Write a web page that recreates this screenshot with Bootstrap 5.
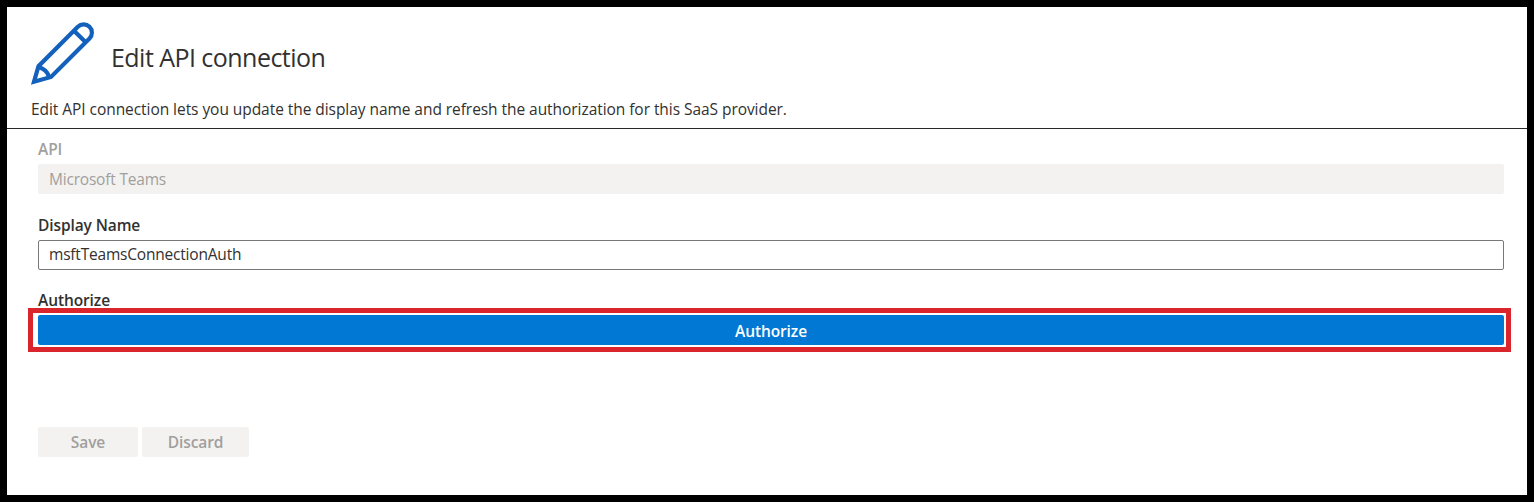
<!DOCTYPE html>
<html lang="en">
<head>
<meta charset="utf-8">
<meta name="viewport" content="width=device-width, initial-scale=1">
<title>Edit API connection</title>
<link href="https://cdn.jsdelivr.net/npm/bootstrap@5.3.0/dist/css/bootstrap.min.css" rel="stylesheet">
<style>
  body { font-family: "Open Sans", "Noto Sans", sans-serif; font-size: 15.5px; line-height: 20px; color: #323130; }
  .blade { height: 502px; border: 7px solid #000; }
  .blade-head { height: 122px; border-bottom: 1px solid #292827; padding: 8px 24px 0 13px; }
  .blade-title { font-size: 25px; line-height: 32px; font-weight: 400; margin: 26px 0 0 6px; letter-spacing: -.54px; }
  .intro { margin: 9px 0 0 11px; letter-spacing: -.055px; }
  .blade-body { padding: 10px 23px 0 31px; }
  .form-label { display: block; font-weight: 600; line-height: 20px; margin: 0 0 5px; letter-spacing: -.1px; }
  .form-control { height: 30px; padding: 0 10px 2px; font-size: 15.5px; line-height: 26px; letter-spacing: -.2px; border-radius: 2px; border-color: #7a7876; color: #323130; }
  .form-control:disabled { background: #f3f2f1; border-color: #f3f2f1; color: #a19f9d; opacity: 1; padding-bottom: 0; line-height: 28px; }
  .off { color: #a19f9d; }
  .field-name { margin-top: 21px; }
  .field-auth { margin-top: 20px; }
  .btn { height: 30px; padding: 0; border: 0; border-radius: 2px; font-size: 15.5px; font-weight: 600; line-height: 30px; letter-spacing: -.1px; }
  .btn-primary { --bs-btn-bg: #0078d4; line-height: 32px; }
  .btn:disabled { background: #f3f2f1; color: #a19f9d; opacity: 1; line-height: 28px; }
  .callout { border: 5px solid #d9252b; padding: 2px 2px 2px 5px; margin: -7px -7px 75px -10px; }
  .btn-save { width: 100px; }
  .btn-discard { width: 107px; }
</style>
</head>
<body>
<main class="blade bg-white d-flex flex-column">
  <header class="blade-head">
    <div class="d-flex align-items-start">
      <svg width="85" height="75" viewBox="0 0 255 225" fill="none" stroke="#1460bd" stroke-width="12.500" aria-hidden="true">
        <path d="M42 200 55.500 153.500 173.500 35.500A24.700 24.700 0 0 1 208.500 70.500L93 186Z"/>
        <path d="M162 47 197 82M54 156Q80 162 87 185"/>
      </svg>
      <h1 class="blade-title">Edit API connection</h1>
    </div>
    <p class="intro">Edit API connection lets you update the display name and refresh the authorization for this SaaS provider.</p>
  </header>
  <form class="blade-body">
    <div>
      <label class="form-label off" for="api">API</label>
      <input class="form-control" id="api" value="Microsoft Teams" disabled>
    </div>
    <div class="field-name">
      <label class="form-label" for="display">Display Name</label>
      <input class="form-control" id="display" value="msftTeamsConnectionAuth">
    </div>
    <div class="field-auth">
      <label class="form-label" for="authorize">Authorize</label>
      <div class="callout"><button type="button" id="authorize" class="btn btn-primary w-100 d-block">Authorize</button></div>
    </div>
    <div class="d-flex gap-1">
      <button type="button" class="btn btn-save" disabled>Save</button>
      <button type="button" class="btn btn-discard" disabled>Discard</button>
    </div>
  </form>
</main>
<script src="https://cdn.jsdelivr.net/npm/bootstrap@5.3.0/dist/js/bootstrap.bundle.min.js"></script>
</body>
</html>
